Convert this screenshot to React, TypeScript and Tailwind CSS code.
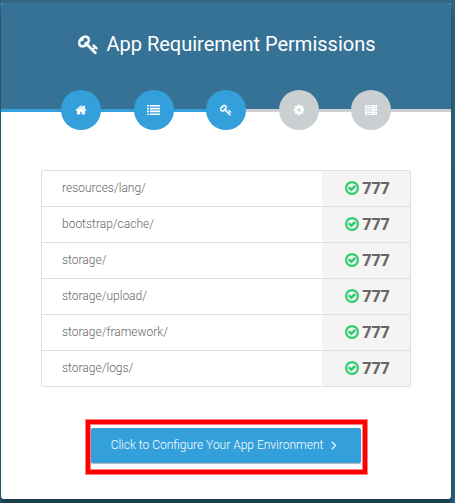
import React from 'react';

const HOME =
  'M1472 992v480q0 26-19 45t-45 19h-384v-384h-256v384h-384q-26 0-45-19t-19-45v-480q0-1 .5-3t.5-3l575-474 575 474q1 2 1 6zm223-69l-62 74q-8 9-21 11h-3q-13 0-21-7l-692-577-692 577q-12 8-24 7-13-2-21-11l-62-74q-8-10-7-23.5t11-21.5l719-599q32-26 76-26t76 26l244 204v-195q0-14 9-23t23-9h192q14 0 23 9t9 23v408l219 182q10 8 11 21.5t-7 23.5z';
const COG =
  'M1152 896q0-106-75-181t-181-75-181 75-75 181 75 181 181 75 181-75 75-181zm512-109v222q0 12-8 23t-20 13l-185 28q-19 54-39 91 35 50 107 138 10 12 10 25t-9 23q-27 37-99 108t-94 71q-12 0-26-9l-138-108q-44 23-91 38-16 136-29 186-7 28-36 28h-222q-14 0-24.5-8.5t-11.5-21.5l-28-184q-49-16-90-37l-141 107q-10 9-25 9-14 0-25-11-126-114-165-168-7-10-7-23 0-12 8-23 15-21 51-66.5t54-70.5q-27-50-41-99l-183-27q-13-2-21-12.5t-8-23.5v-222q0-12 8-23t19-13l186-28q14-46 39-92-40-57-107-138-10-12-10-24 0-10 9-23 26-36 98.5-107.5t94.5-71.5q13 0 26 10l138 107q44-23 91-38 16-136 29-186 7-28 36-28h222q14 0 24.5 8.5t11.5 21.5l28 184q49 16 90 37l142-107q9-9 24-9 13 0 25 10 129 119 165 170 7 8 7 22 0 12-8 23-15 21-51 66.5t-54 70.5q26 50 41 98l183 28q13 2 21 12.5t8 23.5z';
const KEY =
  'M832 512q0-80-56-136t-136-56-136 56-56 136q0 42 19 83-41-19-83-19-80 0-136 56t-56 136 56 136 136 56 136-56 56-136q0-42-19-83 41 19 83 19 80 0 136-56t56-136zm851 704q0 17-49 66t-66 49q-9 0-28.5-16t-36.5-33-38.5-40-24.5-26l-96 96 220 220q28 28 28 68 0 42-39 81t-81 39q-40 0-68-28l-671-671q-176 131-365 131-163 0-265.5-102.5t-102.5-265.5q0-160 95-313t248-248 313-95q163 0 265.5 102.5t102.5 265.5q0 189-131 365l355 355 96-96q-3-3-26-24.5t-40-38.5-33-36.5-16-28.5q0-17 49-66t66-49q13 0 23 10 6 6 46 44.5t82 79.5 86.5 86 73 78 28.5 41z';
const CHECK =
  'M1299 813l-422 422q-19 19-45 19t-45-19l-294-294q-19-19-19-45t19-45l102-102q19-19 45-19t45 19l147 147 275-275q19-19 45-19t45 19l102 102q19 19 19 45t-19 45zm141 83q0-148-73-273t-198-198-273-73-273 73-198 198-73 273 73 273 198 198 273 73 273-73 198-198 73-273zm224 0q0 209-103 385.5t-279.5 279.5-385.5 103-385.5-103-279.5-279.5-103-385.5 103-385.5 279.5-279.5 385.5-103 385.5 103 279.5 279.5 103 385.5z';
const ANGLE =
  'M1171 960q0 13-10 23l-466 466q-10 10-23 10t-23-10l-50-50q-10-10-10-23t10-23l393-393-393-393q-10-10-10-23t10-23l50-50q10-10 23-10t23 10l466 466q10 10 10 23z';

function Icon({ d, className, stroke = 0 }: { d: string; className: string; stroke?: number }) {
  return (
    <svg viewBox="0 0 1792 1792" fill="currentColor" stroke="currentColor" strokeWidth={stroke} className={className}>
      <path d={d} />
    </svg>
  );
}

function ListIcon() {
  return (
    <svg viewBox="0 0 13 10" fill="currentColor" className="h-2.5 w-[13px]">
      {[0, 2.8, 5.6, 8.4].map((y) => (
        <g key={y}>
          <rect x="0" y={y} width="1.8" height="1.6" rx="0.2" />
          <rect x="2.8" y={y} width="10.2" height="1.6" rx="0.2" />
        </g>
      ))}
    </svg>
  );
}

function ServerIcon() {
  return (
    <svg viewBox="0 0 12 10" fill="currentColor" className="h-2.5 w-3">
      {[0, 3.5, 7].map((y) => (
        <path
          key={y}
          fillRule="evenodd"
          d={`M0 ${y}h12v3h-12zM1 ${y + 1.1}v.8h6v-.8zM10 ${y + 1}v1h1v-1z`}
        />
      ))}
    </svg>
  );
}

const steps = [
  { icon: <Icon d={HOME} stroke={40} className="size-3" />, done: true },
  { icon: <ListIcon />, done: true },
  { icon: <Icon d={KEY} stroke={30} className="size-3" />, done: true },
  { icon: <Icon d={COG} stroke={50} className="size-3" />, done: false },
  { icon: <ServerIcon />, done: false },
];

const folders = [
  'resources/lang/',
  'bootstrap/cache/',
  'storage/',
  'storage/upload/',
  'storage/framework/',
  'storage/logs/',
];

export default function App() {
  return (
    <div className="h-[503px] w-[455px] overflow-hidden bg-linear-to-b from-[#316684] to-[#2a627f] pt-[3px] pl-px font-['Roboto',sans-serif]">
      <main className="flex h-[496px] w-[450px] flex-col rounded-[3px] bg-white shadow-[0_10px_10px_rgba(0,0,0,0.19),0_6px_3px_rgba(0,0,0,0.23)]">
        <header className="flex h-[106px] shrink-0 items-start justify-center rounded-t-[3px] bg-[#357295] pt-[27px] pl-[2px] text-white">
          <Icon d={KEY} stroke={20} className="mt-[4px] mr-[7px] size-[21px]" />
          <h1 className="text-[20px] leading-7">App Requirement Permissions</h1>
        </header>
        <div className="flex h-[3px] shrink-0 items-center bg-linear-to-r from-[#34a0db] from-50% to-[#cacfd2] to-50% pl-[60px]">
          <ol className="mb-px flex gap-[32.5px]">
            {steps.map((s, i) => (
              <li
                key={i}
                className={`flex size-10 items-center justify-center rounded-full text-white ${s.done ? 'bg-[#34a0db]' : 'bg-[#cacfd2]'}`}
              >
                {s.icon}
              </li>
            ))}
          </ol>
        </div>
        <ul className="mx-10 mt-[58px] shrink-0 overflow-hidden rounded-[2px] border border-[#dfdfdf]">
          {folders.map((f) => (
            <li key={f} className="flex h-9 border-b border-[#dfdfdf] last:h-[35px] last:border-b-0">
              <span className="flex-1 pt-[7px] pl-5 text-[12px] leading-5 font-light text-[#666]">{f}</span>
              <span className="flex w-[88px] items-center justify-center gap-[3px] bg-[#f4f4f4] pb-[2px] pl-[2px] font-['Noto_Sans',sans-serif] text-[16px] font-bold text-[#666]">
                <Icon d={CHECK} stroke={20} className="size-4 text-[#2ecc71]" />
                <span className="-ml-px">777</span>
              </span>
            </li>
          ))}
        </ul>
        <div className="mt-8 ml-[84px] h-[56px] w-[283px] shrink-0 border border-[#ff8080]">
          <div className="h-full border-[4px] border-[#f00]">
            <div className="h-full border border-[#ff8080] pt-[3px]">
              <button className="flex h-[35px] w-[270px] items-center justify-center rounded-[2px] bg-[#34a0db] pb-[2px] text-[12px] font-light text-white shadow-[0_1px_1px_rgba(0,0,0,0.3)]">
                Click to Configure Your App Environment
                <Icon d={ANGLE} stroke={20} className="ml-1 size-3.5" />
              </button>
            </div>
          </div>
        </div>
      </main>
    </div>
  );
}
